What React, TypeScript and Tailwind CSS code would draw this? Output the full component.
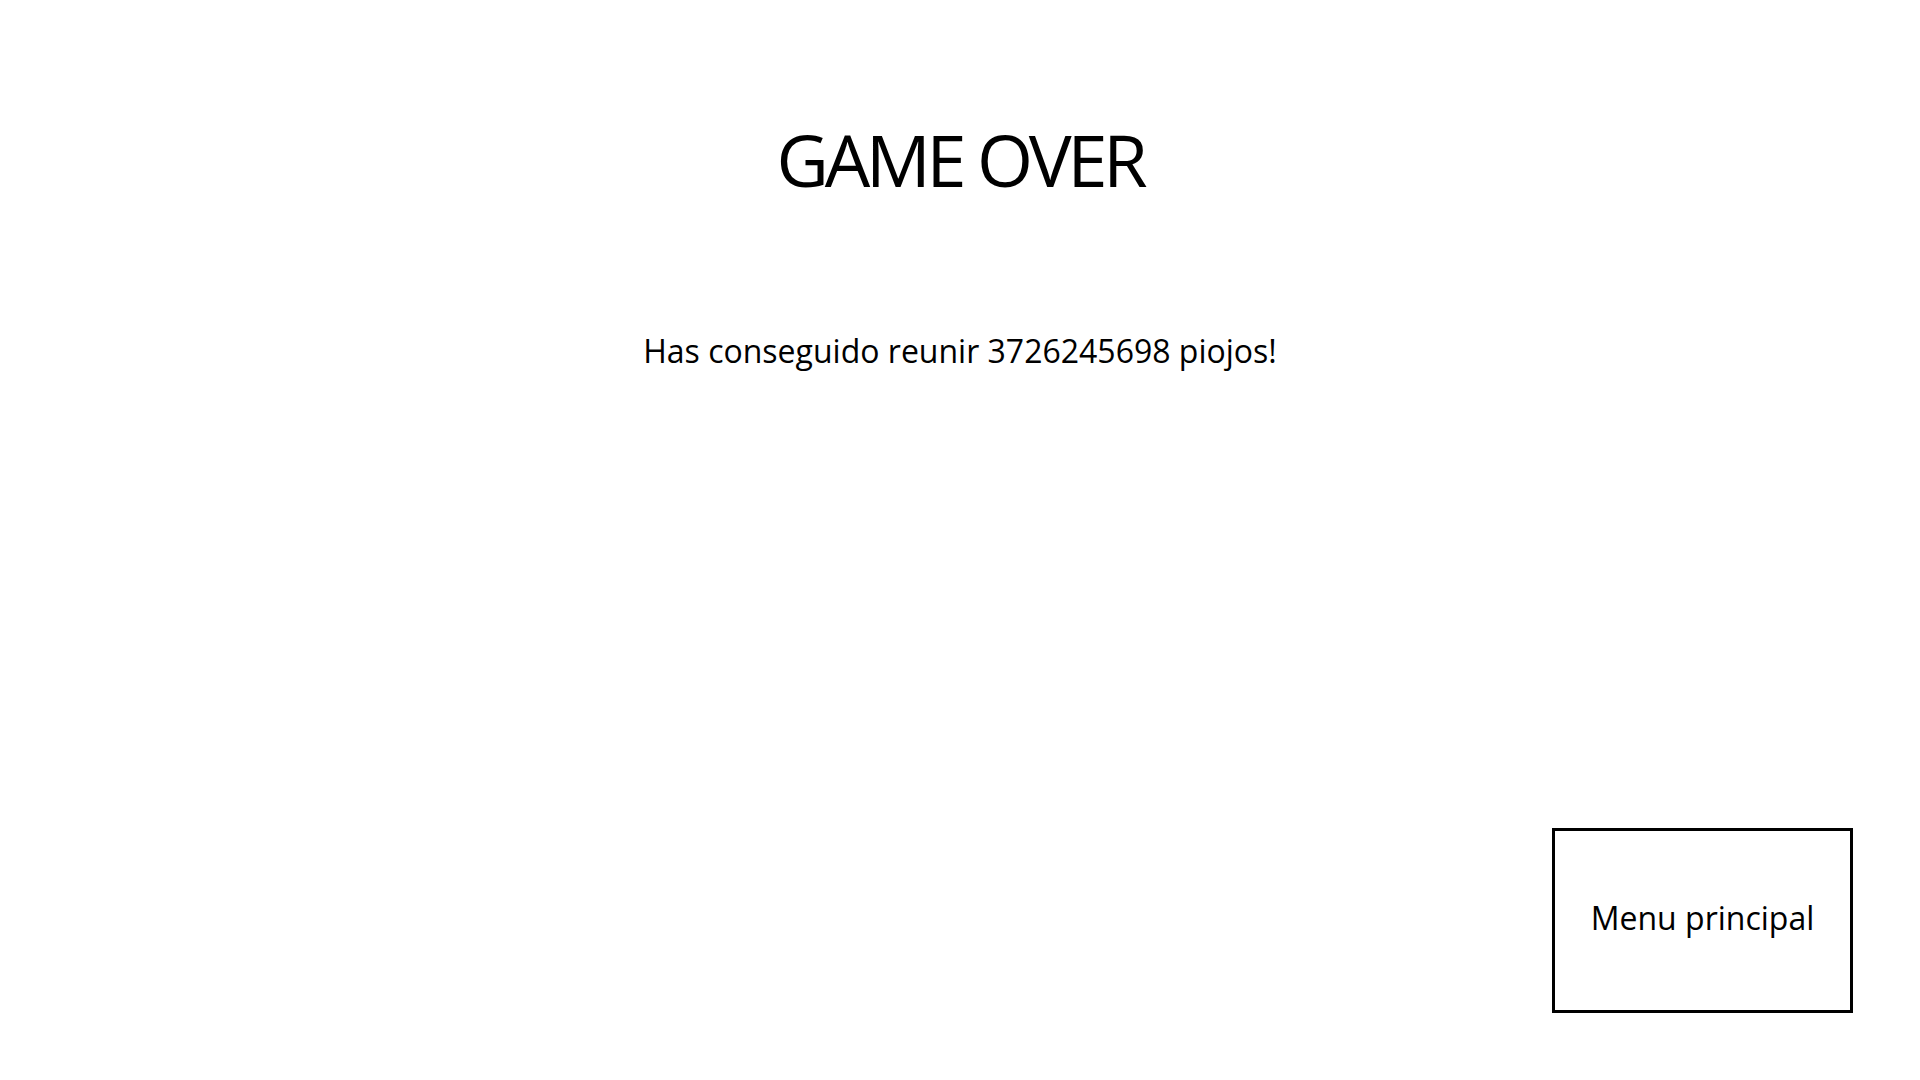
// Pantalla de fin de partida: puntaje final y vuelta al menú.
const score = 3726245698;

export default function App() {
  return (
    <div className="flex h-screen w-full flex-col bg-white text-black font-['Open_Sans',sans-serif]">
      <h1 className="mt-[123px] text-center text-[72px] leading-none font-normal tracking-[-4.2px]">
        GAME OVER
      </h1>

      <p className="mt-[140px] text-center text-[32px] leading-none">
        Has conseguido reunir {score} piojos!
      </p>

      <div className="flex flex-1 items-end justify-end pr-[67px] pb-[67px]">
        <button
          type="button"
          className="flex h-[185px] w-[301px] items-center justify-center border-[3px] border-black bg-white pb-[6px] text-[32px]"
        >
          Menu principal
        </button>
      </div>
    </div>
  );
}
